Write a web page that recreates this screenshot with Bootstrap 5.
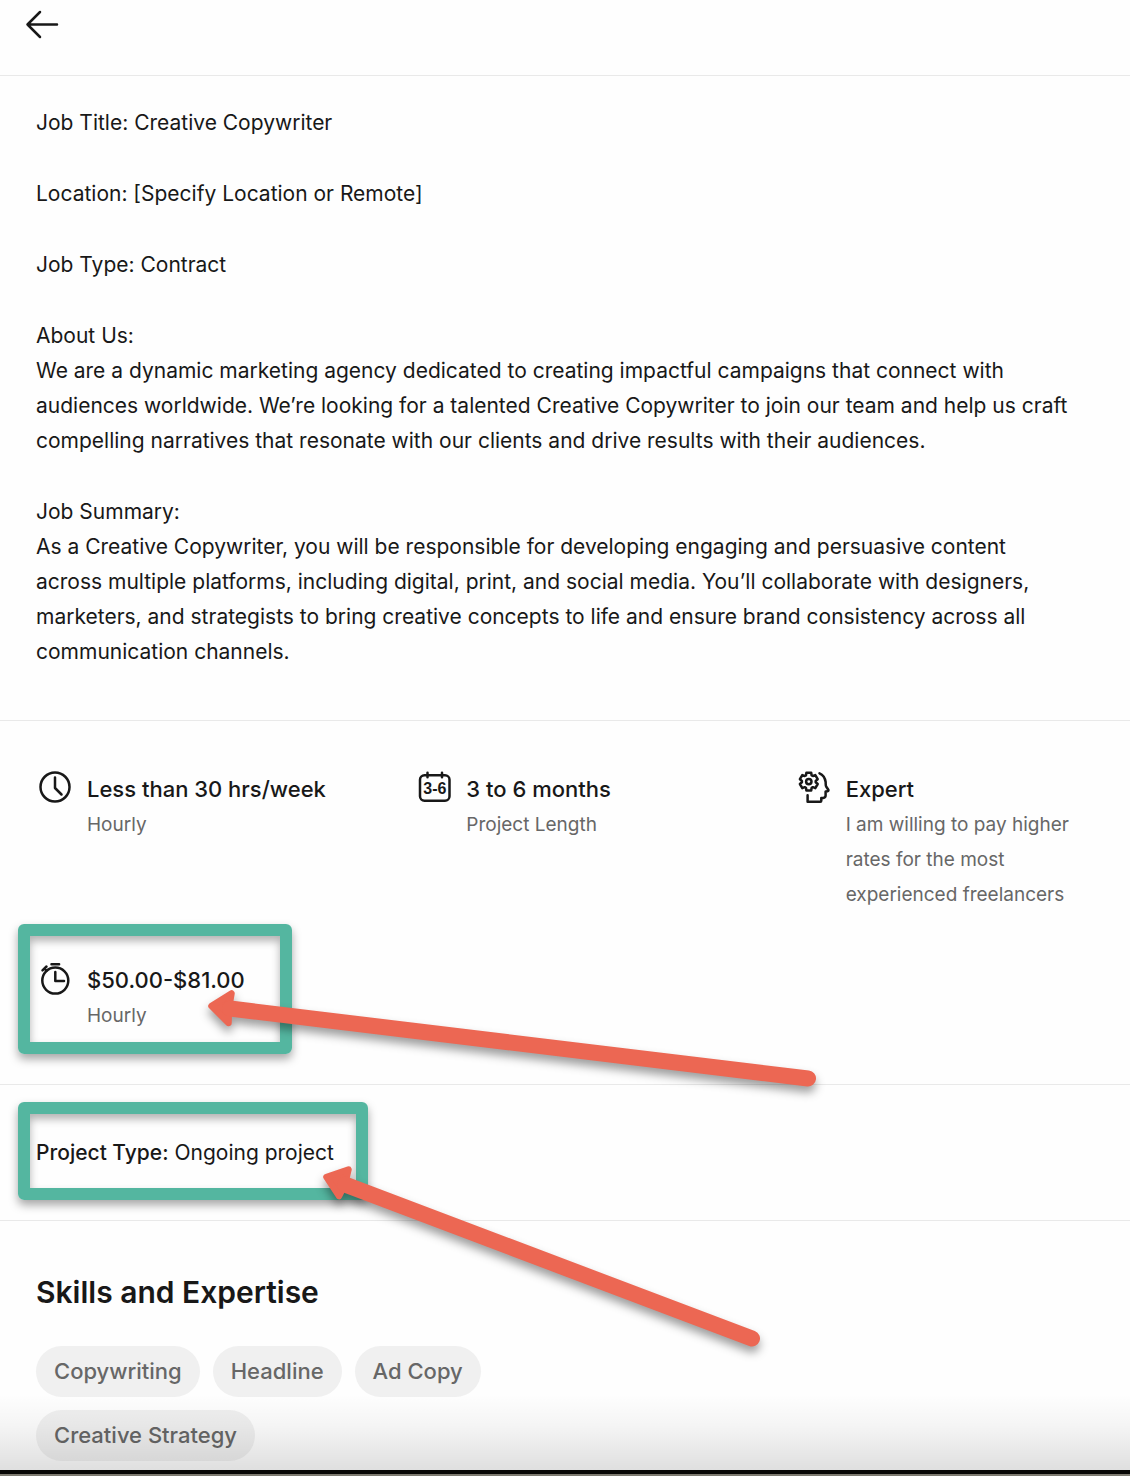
<!DOCTYPE html>
<html lang="en">
<head>
<meta charset="utf-8">
<meta name="viewport" content="width=device-width, initial-scale=1">
<title>Creative Copywriter – Job details</title>
<link href="https://cdn.jsdelivr.net/npm/bootstrap@5.3.0/dist/css/bootstrap.min.css" rel="stylesheet">
<style>
  body { font-family: Inter, "Liberation Sans", sans-serif; font-size: 21px; line-height: 35px; color: #181818; background: #fefefe; }
  .job-bar { height: 76px; padding: 0 24px; }
  .job-section { padding: 50px 36px; }
  .job-features { padding-bottom: 51px; }
  .line-below { border-bottom: 1px solid #e9e9e9; }
  .back-btn { padding: 8px 0; line-height: 1; color: #181818; }
  .job-text { padding: 29px 60px 51px 36px; }
  .job-text p { margin: 0 0 36px; }
  .job-text p:last-child { margin-bottom: 0; }
  .feature-grid { grid-template-columns: repeat(3, 1fr); gap: 50px 80px; }
  .feature { gap: 13px; }
  .ico { width: 38px; height: 32px; flex: none; overflow: visible; fill: none; stroke: #181818; stroke-width: 2.5; stroke-linecap: round; stroke-linejoin: round; }
  .feature-name { font-size: 22px; line-height: 36px; font-weight: 500; margin: 0; }
  .feature-note { font-size: 19px; line-height: 35px; color: #676767; margin: 0; }
  .type-label { font-weight: 500; }
  .skills { padding: 50px 36px 9px; }
  .skills h2 { font-size: 30px; line-height: 42px; font-weight: 600; margin: 0 0 33px; }
  .skill-list { gap: 13px; max-width: 500px; }
  .skill { display: block; padding: 8px 18px; border-radius: 26px; background: #f0f0f0; color: #676767; font-size: 22px; font-weight: 500; }
  .fade-out { height: 76px; background: linear-gradient(rgba(0,0,0,0), rgba(0,0,0,.035) 40%, rgba(0,0,0,.12)); pointer-events: none; }
  .strip { height: 6px; background: #060604; border-bottom: 2px solid #7d7a70; }
  .callout { position: absolute; border: 12px solid #54b6a0; border-radius: 6px; box-shadow: 0 5px 10px rgba(0,0,0,.35), inset 0 5px 9px rgba(0,0,0,.3); pointer-events: none; }
  .callout-rate { left: -18px; top: -38px; width: 274px; height: 130px; }
  .callout-type { left: -18px; top: -33px; width: 350px; height: 98px; }
  .pointer { position: absolute; left: 0; top: 0; overflow: visible; z-index: 2; pointer-events: none; fill: #ec6753; stroke: #ec6753; stroke-linejoin: round; stroke-linecap: round; filter: drop-shadow(0 6px 5px rgba(0,0,0,.38)); }
  @media (max-width: 800px) { .feature-grid { grid-template-columns: 1fr; } }
</style>
</head>
<body>
<header class="job-bar line-below">
  <button type="button" class="btn border-0 back-btn" aria-label="Back">
    <svg width="36" height="32" viewBox="0 0 36 32" fill="none" stroke="#181818" stroke-width="2.5" stroke-linecap="round" stroke-linejoin="round"><path d="M16 4 3.500 16.500 16 29M3.500 16.500H33"/></svg>
  </button>
</header>
<main>
  <section class="job-text line-below">
    <p>Job Title: Creative Copywriter</p>
    <p>Location: [Specify Location or Remote]</p>
    <p>Job Type: Contract</p>
    <p>About Us:<br>We are a dynamic marketing agency dedicated to creating impactful campaigns that connect with audiences worldwide. We’re looking for a talented Creative Copywriter to join our team and help us craft compelling narratives that resonate with our clients and drive results with their audiences.</p>
    <p>Job Summary:<br>As a Creative Copywriter, you will be responsible for developing engaging and persuasive content across multiple platforms, including digital, print, and social media. You’ll collaborate with designers, marketers, and strategists to bring creative concepts to life and ensure brand consistency across all communication channels.</p>
  </section>

  <section class="job-section job-features line-below">
    <ul class="feature-grid d-grid list-unstyled mb-0">
      <li class="feature d-flex">
        <svg class="ico" viewBox="0 0 38 32"><circle cx="19" cy="16" r="14.500"/><path d="M19 6.500V17l6.500 6.500"/></svg>
        <div><p class="feature-name">Less than 30 hrs/week</p><p class="feature-note">Hourly</p></div>
      </li>
      <li class="feature d-flex">
        <svg class="ico" viewBox="0 0 38 32"><rect x="5" y="4.200" width="29.500" height="25.600" rx="4.500"/><path d="M12.500 1.800v4.400M27 1.800v4.400"/><text x="19.800" y="23.300" text-anchor="middle" font-family="Liberation Sans, sans-serif" font-weight="700" font-size="16" fill="#181818" stroke="none">3-6</text></svg>
        <div><p class="feature-name">3 to 6 months</p><p class="feature-note">Project Length</p></div>
      </li>
      <li class="feature d-flex">
        <svg class="ico" viewBox="0 0 38 32"><g transform="translate(13.800 10.600)"><circle r="2.700"/><path d="M-2.400-8.900H2.400L2.800-6.300 4.100-5.600 6.500-6.500 8.900-2.400 6.900-.7V.7L8.900 2.400 6.500 6.500 4.100 5.600 2.800 6.300 2.400 8.900H-2.400L-2.800 6.300-4.100 5.600-6.500 6.500-8.900 2.400-6.900.7V-.7L-8.900-2.400-6.500-6.500-4.100-5.600-2.800-6.300Z"/></g><path d="M24.500 2.300c3.500 1.500 5.500 4.500 6.100 8.500.3 2-.3 3.500.7 5l2 3c.4.600 0 1.300-.7 1.400l-2 .3v4c0 1.500-1 2.300-2.400 2.400l-1.900.2v2.600c0 .7-.4 1-1 1H12.600v-6.500"/></svg>
        <div><p class="feature-name">Expert</p><p class="feature-note">I am willing to pay higher rates for the most experienced freelancers</p></div>
      </li>
      <li class="feature d-flex position-relative">
        <svg class="ico" viewBox="0 0 38 32"><circle cx="19.300" cy="18.600" r="13"/><path d="M19.300 10v8.900H28M15.500 2.300h7.600M6.500 8.300l4-3.800M8.500 6.500l2 2.200"/></svg>
        <div><p class="feature-name">$50.00-$81.00</p><p class="feature-note">Hourly</p></div>
        <span class="callout callout-rate"></span>
        <svg class="pointer" width="800" height="140" aria-hidden="true"><path stroke-width="6.500" d="M175.500 44 195.500 31.500 193 46 192.500 61Z"/><path stroke-width="16" d="M194 46.500 772 116.500"/></svg>
      </li>
    </ul>
  </section>

  <section class="job-section line-below">
    <div class="position-relative">
      <span class="type-label">Project Type:</span> <span>Ongoing project</span>
      <span class="callout callout-type"></span>
      <svg class="pointer" width="740" height="220" aria-hidden="true"><path stroke-width="6.500" d="M290.500 42 312.500 34.500 309 49 303 61Z"/><path stroke-width="16" d="M309 49.500 716 203.500"/></svg>
    </div>
  </section>

  <section class="skills position-relative">
    <h2>Skills and Expertise</h2>
    <ul class="skill-list d-flex flex-wrap list-unstyled mb-0">
      <li><a class="skill text-decoration-none" href="#">Copywriting</a></li>
      <li><a class="skill text-decoration-none" href="#">Headline</a></li>
      <li><a class="skill text-decoration-none" href="#">Ad Copy</a></li>
      <li><a class="skill text-decoration-none" href="#">Creative Strategy</a></li>
    </ul>
    <div class="fade-out position-absolute bottom-0 start-0 w-100"></div>
  </section>
</main>
<footer class="strip"></footer>
<script src="https://cdn.jsdelivr.net/npm/bootstrap@5.3.0/dist/js/bootstrap.bundle.min.js"></script>
</body>
</html>
